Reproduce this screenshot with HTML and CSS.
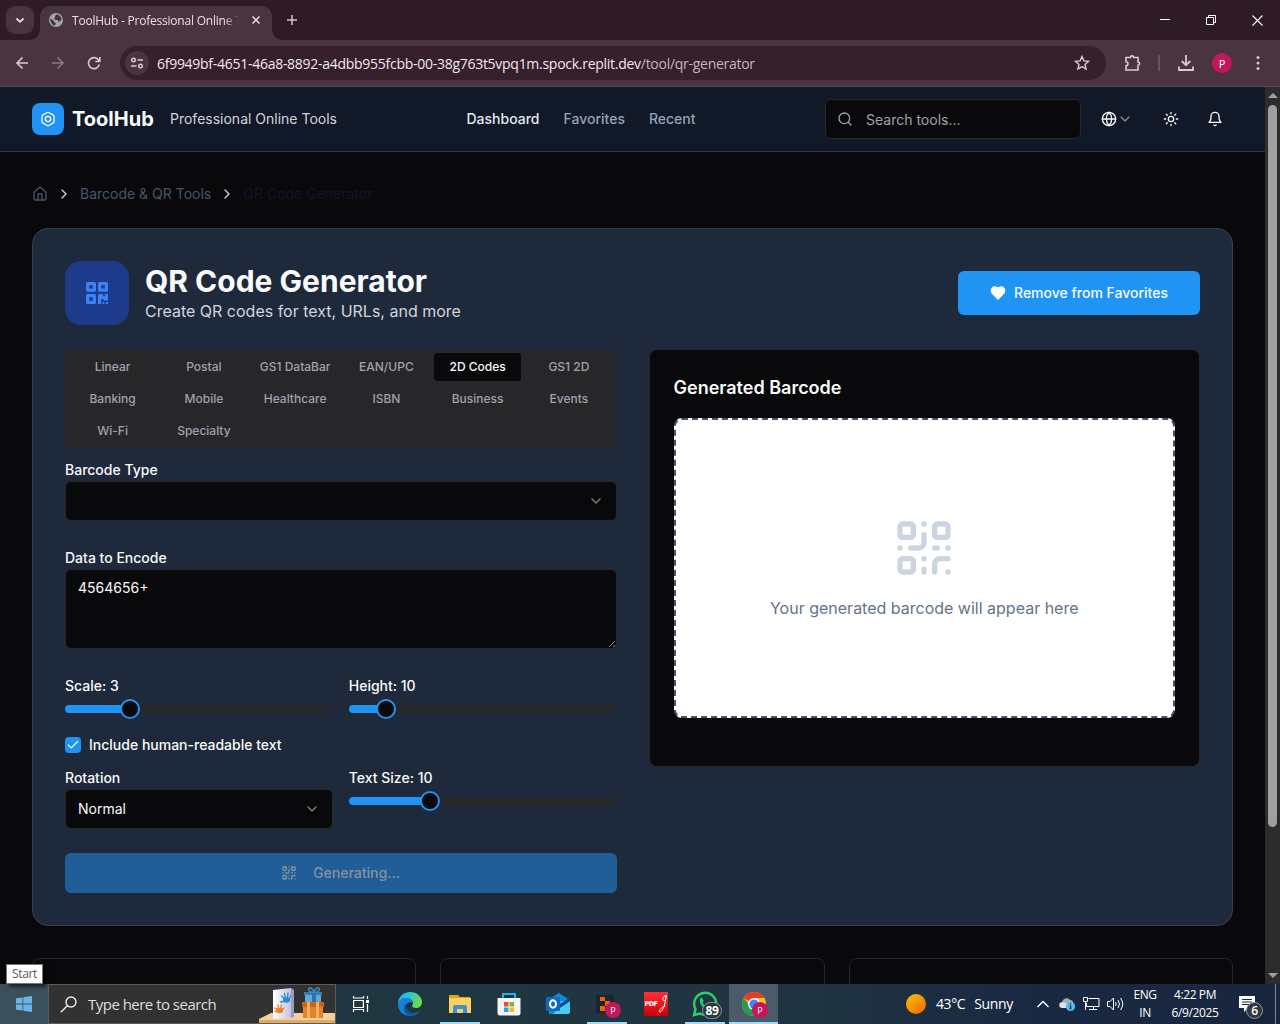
FILE: index.html
```html
<!DOCTYPE html>
<html lang="en">
<head>
<meta charset="utf-8">
<title>ToolHub - Professional Online Tools</title>
<link rel="stylesheet" href="styles.css">
</head>
<body>
<svg class="defs" width="0" height="0" aria-hidden="true">
  <symbol id="qr" viewBox="0 0 24 24"><rect width="5" height="5" x="3" y="3" rx="1"/><rect width="5" height="5" x="16" y="3" rx="1"/><rect width="5" height="5" x="3" y="16" rx="1"/><path d="M21 16h-3a2 2 0 0 0-2 2v3M21 21v.01M12 7v3a2 2 0 0 1-2 2H7M3 12h.01M12 3h.01M12 16v.01M16 12h1M21 12v.01M12 21v-1"/></symbol>
  <symbol id="down" viewBox="0 0 24 24"><path d="m6 9 6 6 6-6"/></symbol>
  <symbol id="right" viewBox="0 0 24 24"><path d="m9 18 6-6-6-6"/></symbol>
</svg>

<div class="tabstrip">
  <div class="tab-search"><svg class="ln" width="10" height="10" viewBox="0 0 10 10"><path d="m1.500 3.500 3.500 3.300 3.500-3.300" stroke-width="1.800"/></svg></div>
  <div class="tab">
    <svg width="14" height="14" viewBox="0 0 14 14"><circle cx="7" cy="7" r="7" fill="#9fa7ad"/><path d="M7.500 1.500 6 3v2H4.500L6.500 7H9v2l2-1 1.500-1C13 4 10 1.500 7.500 1.500ZM1.500 5.500C1 9 3 12 6 12.500L7 10.500 5 9V8Z" fill="#4a3440"/></svg>
    <span class="tab-title">ToolHub - Professional Online Tools</span>
    <svg class="ln tab-x" width="10" height="10" viewBox="0 0 10 10"><path d="m1.500 1.500 7 7m0-7-7 7" stroke-width="1.500"/></svg>
  </div>
  <svg class="ln new-tab" width="12" height="12" viewBox="0 0 12 12"><path d="M6 1v10M1 6h10" stroke-width="1.500"/></svg>
  <div class="win-btns">
    <svg width="11" height="10" viewBox="0 0 11 10"><path d="M0 4.500h10" stroke="#fff"/></svg>
    <svg width="11" height="11" viewBox="0 0 11 11" fill="none" stroke="#fff"><path d="M.5 2.500h7v7h-7zM2.500 2.500v-2h7v7h-2"/></svg>
    <svg width="11" height="11" viewBox="0 0 11 11"><path d="m.5.5 10 10m0-10-10 10" stroke="#fff" stroke-width="1.100"/></svg>
  </div>
</div>

<div class="toolbar">
  <svg class="ln t-back" width="14" height="14" viewBox="0 0 14 14"><path d="M13 7H2m5.500-5.500L2 7l5.500 5.500" stroke-width="1.600"/></svg>
  <svg class="ln t-fwd" width="14" height="14" viewBox="0 0 14 14"><path d="M1 7h11M6.500 1.500 12 7l-5.500 5.500" stroke-width="1.600"/></svg>
  <svg class="ln t-rel" width="14" height="14" viewBox="0 0 14 14"><path d="M12.300 8.500A5.500 5.500 0 1 1 11.500 4L12.500 5.200M12.800 1v4.500H8.300" stroke-width="1.600"/></svg>
  <div class="omnibox">
    <span class="site-info"><svg class="ln" width="14" height="14" viewBox="0 0 14 14"><circle cx="3.500" cy="4" r="1.800"/><path d="M7.500 4H13M1 10h5.500"/><circle cx="10.500" cy="10" r="1.800"/></svg></span>
    <span class="url">6f9949bf-4651-46a8-8892-a4dbb955fcbb-00-38g763t5vpq1m.spock.replit.dev<i>/tool/qr-generator</i></span>
    <svg class="ln star" width="16" height="16" viewBox="0 0 16 16"><path d="m8 1.500 1.900 4.400 4.700.4-3.600 3.100 1.100 4.700L8 11.600l-4.100 2.500L5 9.400 1.400 6.300l4.700-.4Z" stroke-width="1.400"/></svg>
  </div>
  <svg class="ln t-ext" width="18" height="18" viewBox="0 0 18 18"><path d="M2 3.500h4.500a1.600 1.600 0 0 1 3.200 0H14V8a1.600 1.600 0 0 1 0 3.200V16H2v-4.300a2 2 0 0 0 0-4Z" stroke-width="1.600"/></svg>
  <span class="t-sep"></span>
  <svg class="ln t-dl" width="18" height="18" viewBox="0 0 18 18"><path d="M9 1v10M4.700 7 9 11.200 13.300 7M2 12.500V16h14v-3.500" stroke-width="1.800"/></svg>
  <span class="avatar">P</span>
  <svg class="t-menu" width="4" height="16" viewBox="0 0 4 16" fill="#e3c5d3"><circle cx="2" cy="2.500" r="1.500"/><circle cx="2" cy="8" r="1.500"/><circle cx="2" cy="13.500" r="1.500"/></svg>
</div>

<div class="viewport">
  <div class="page">
    <header class="header">
      <div class="logo"><svg class="ic" width="16" height="16" viewBox="0 0 24 24"><path d="M21 16V8a2 2 0 0 0-1-1.730l-7-4a2 2 0 0 0-2 0l-7 4A2 2 0 0 0 3 8v8a2 2 0 0 0 1 1.730l7 4a2 2 0 0 0 2 0l7-4A2 2 0 0 0 21 16z"/><circle cx="12" cy="12" r="4"/></svg></div>
      <strong class="brand">ToolHub</strong>
      <span class="tagline">Professional Online Tools</span>
      <nav class="nav"><a class="on">Dashboard</a><a>Favorites</a><a>Recent</a></nav>
      <div class="search"><svg class="ic" width="16" height="16" viewBox="0 0 24 24"><circle cx="11" cy="11" r="8"/><path d="m21 21-4.300-4.300"/></svg><span>Search tools...</span></div>
      <div class="lang"><svg class="ic" width="16" height="16" viewBox="0 0 24 24"><circle cx="12" cy="12" r="10"/><path d="M12 2a14.500 14.500 0 0 0 0 20 14.500 14.500 0 0 0 0-20M2 12h20"/></svg><svg class="ic dim" width="16" height="16"><use href="#down"/></svg></div>
      <svg class="ic sun" width="16" height="16" viewBox="0 0 24 24"><circle cx="12" cy="12" r="4"/><path d="M12 2v2M12 20v2m-7.070-17.070 1.410 1.410m11.320 11.320 1.410 1.410M2 12h2m16 0h2M6.340 17.660l-1.410 1.410M19.070 4.930l-1.410 1.410"/></svg>
      <svg class="ic bell" width="16" height="16" viewBox="0 0 24 24"><path d="M6 8a6 6 0 0 1 12 0c0 7 3 9 3 9H3s3-2 3-9M10.300 21a1.940 1.940 0 0 0 3.400 0"/></svg>
    </header>
    <main class="main">
      <div class="crumbs">
        <svg class="ic" width="16" height="16" viewBox="0 0 24 24"><path d="M15 21v-8a1 1 0 0 0-1-1h-4a1 1 0 0 0-1 1v8"/><path d="M3 10a2 2 0 0 1 .709-1.528l7-5.999a2 2 0 0 1 2.582 0l7 5.999A2 2 0 0 1 21 10v9a2 2 0 0 1-2 2H5a2 2 0 0 1-2-2z"/></svg>
        <svg class="ic sep" width="16" height="16"><use href="#right"/></svg>
        <span>Barcode &amp; QR Tools</span>
        <svg class="ic sep" width="16" height="16"><use href="#right"/></svg>
        <span class="here">QR Code Generator</span>
      </div>
      <section class="card">
        <div class="card-head">
          <div class="tool-icon"><svg width="24" height="24" viewBox="0 0 24 24" fill="none" stroke="#3b82f6" stroke-width="3.200" stroke-linejoin="round"><rect x="2.600" y="2.600" width="6.800" height="6.600"/><rect x="14.600" y="2.600" width="6.800" height="6.600"/><rect x="2.600" y="14.600" width="6.800" height="6.800"/><path d="M13 14.500q0-1.500 1.500-1.500H18v2.200h1.800V13H23v6.500h-4.500V18H16.200v5H13zM17.500 21h2v2h-2zM21 21h2v2h-2z" fill="#3b82f6" stroke="none"/></svg></div>
          <div class="titles"><h1>QR Code Generator</h1><p>Create QR codes for text, URLs, and more</p></div>
          <button class="fav"><svg width="16" height="16" viewBox="0 0 24 24" fill="#fff" stroke="#fff" stroke-width="2"><path d="M19 14c1.490-1.460 3-3.210 3-5.500A5.500 5.500 0 0 0 16.500 3c-1.760 0-3 .5-4.500 2-1.500-1.500-2.740-2-4.500-2A5.500 5.500 0 0 0 2 8.500c0 2.300 1.500 4.050 3 5.500l7 7Z"/></svg>Remove from Favorites</button>
        </div>
        <div class="cols">
          <div class="form">
            <div class="tabs"><span>Linear</span><span>Postal</span><span>GS1 DataBar</span><span>EAN/UPC</span><span class="on">2D Codes</span><span>GS1 2D</span><span>Banking</span><span>Mobile</span><span>Healthcare</span><span>ISBN</span><span>Business</span><span>Events</span><span>Wi-Fi</span><span>Specialty</span></div>
            <div class="field first"><label>Barcode Type</label><div class="select"><span></span><svg class="ic" width="16" height="16"><use href="#down"/></svg></div></div>
            <div class="field"><label>Data to Encode</label><textarea class="area">4564656+</textarea></div>
            <div class="pair">
              <div><label>Scale: 3</label><div class="slider"><span class="fill" style="width:65px"></span><span class="thumb"></span></div></div>
              <div><label>Height: 10</label><div class="slider"><span class="fill" style="width:37px"></span><span class="thumb"></span></div></div>
            </div>
            <div class="check"><span class="box"><svg class="ic" width="14" height="14" viewBox="0 0 24 24"><path d="M20 6 9 17l-5-5"/></svg></span><label>Include human-readable text</label></div>
            <div class="pair second">
              <div><label>Rotation</label><div class="select"><span>Normal</span><svg class="ic" width="16" height="16"><use href="#down"/></svg></div></div>
              <div><label>Text Size: 10</label><div class="slider"><span class="fill" style="width:81px"></span><span class="thumb"></span></div></div>
            </div>
            <button class="gen"><svg class="ic" width="16" height="16"><use href="#qr"/></svg>Generating...</button>
          </div>
          <div class="result">
            <h2>Generated Barcode</h2>
            <div class="drop"><svg class="ic" width="64" height="64"><use href="#qr"/></svg><p>Your generated barcode will appear here</p></div>
          </div>
        </div>
      </section>
      <div class="more"><div></div><div></div><div></div></div>
    </main>
  </div>
  <div class="scroll"><i class="up"></i><span></span><i class="dn"></i></div>
</div>

<div class="taskbar">
  <div class="start"><svg width="16" height="16" viewBox="0 0 16 16" fill="#6cb5e0"><path d="M0 2.300 6.500 1.400v6.200H0zM7.300 1.300 16 0v7.600H7.300zM0 8.400h6.500v6.200L0 13.700zM7.300 8.400H16V16l-8.700-1.300z"/></svg></div>
  <div class="tsearch">
    <svg width="17" height="17" viewBox="0 0 17 17" fill="none" stroke="#eee" stroke-width="1.400"><circle cx="11" cy="6" r="5"/><path d="M7.300 9.700.8 16.200"/></svg>
    <span>Type here to search</span>
    <svg class="gifts" width="76" height="38" viewBox="0 0 76 38">
      <defs><linearGradient id="paper"><stop offset="0" stop-color="#fff"/><stop offset="1" stop-color="#c3c1e3"/></linearGradient></defs>
      <path d="M0 34 12 28H76V38H0Z" fill="#f4d19a"/><path d="M0 35h76v3H0z" fill="#e2aa66"/>
      <path d="m14 5 18-2v30l-18 1z" fill="url(#paper)"/><path d="m32 3 3 2v27l-3 1z" fill="#9d9cba"/>
      <g fill="#258fd0" stroke="#258fd0" stroke-width="1.300" stroke-linecap="round"><ellipse cx="27.500" cy="15" rx="3" ry="2"/><path d="m25 13-2.500-2m4 2-1-4.500m3 4.500.5-5m1 6 2-3.500m-7.500 6-3 .5"/></g>
      <g fill="#f08029" stroke="#f08029" stroke-width="1.300" stroke-linecap="round"><ellipse cx="20.500" cy="25.500" rx="3" ry="2"/><path d="m18 24-2.500-1m4 1-.5-4m2.500 4 1-4m0 5 2.500-2m-6.500 3-2.500.5"/></g>
      <path d="M46 9h16v9H46z" fill="#62abd7"/><path d="M45 7h18v3H45z" fill="#377eae"/><path d="M53 7h4v11h-4z" fill="#326fab"/><path d="M55 7c-6 1-7-5-3-4l3 3 3-3c4-1 3 5-3 4Z" fill="none" stroke="#3d8fcb" stroke-width="1.500"/>
      <path d="M44 19h20v14H44z" fill="#e4812c"/><path d="M43 17h22v5H43z" fill="#c46620"/><path d="M48 17h3v16h-3zm9 0h3v16h-3z" fill="#efb257"/>
    </svg>
  </div>
  <div class="apps">
    <span><svg width="18" height="16" viewBox="0 0 18 16" fill="none" stroke="#fff" stroke-width="1.200"><path d="M1.600 4.500h9.800v7H1.600zM1.500 0v2h10V0M1.500 16v-2.500h10V16M15.500 0v3M15.500 8v8"/><path d="M14 4h3v3h-3z" fill="#fff" stroke="none"/></svg></span>
    <span><svg width="24" height="24" viewBox="0 0 24 24"><defs><linearGradient id="eg" x2="1" y2=".3"><stop stop-color="#2aa8e8"/><stop offset=".5" stop-color="#2cc5d7"/><stop offset="1" stop-color="#6ddc4b"/></linearGradient></defs><path d="M0 12C0 5 5 0 12 0s12 5 12 10c0 4-3 6-6 6-2 0-4-.7-4-2 0-.8 1-1.200 1-2.700C15 8 11 6 8 6 4 6 1 9 0 12Z" fill="url(#eg)"/><path d="M0 12C1 7 5 6 8 6s6 2 7 5c-3-2-7 0-7 4 0 4 4 6 8 6 3 0 5-1 6.500-2.500C20 22 16 24 12 24 5 24 0 19 0 12Z" fill="#1583db"/><path d="M8 15c0 4 4 6 8 6 3 0 5-1 6.500-2.500C20 22 16 24 12 24c-4-1-7-5-6-9 .5-3 4-5.500 6-5-2 1-4 2-4 5Z" fill="#0c58a9"/></svg></span>
    <span class="run"><svg width="22" height="18" viewBox="0 0 22 18"><path d="M0 0h9l2 2h10v15H0z" fill="#e1a119"/><path d="M0 3h22v15H0z" fill="#fdd263"/><path d="M4 18v-6q0-2 2-2h10q2 0 2 2v6h-4v-4H8v4z" fill="#3d91d4"/></svg></span>
    <span><svg width="24" height="24" viewBox="0 0 24 24"><path d="M6 7V2h12v5" fill="none" stroke="#26b1ed" stroke-width="2"/><path d="M.5 6h23v15q0 2.500-2.500 2.500H3Q.5 23.500.5 21z" fill="#f4f4f4"/><path d="M7 10h4.500v4.500H7z" fill="#e94f29"/><path d="M12.500 10H17v4.500h-4.500z" fill="#7cb928"/><path d="M7 15.500h4.500V20H7z" fill="#22a2e8"/><path d="M12.500 15.500H17V20h-4.500z" fill="#fab71b"/></svg></span>
    <span><svg width="24" height="24" viewBox="0 0 24 24"><path d="m3 7 10-6 9 6v15H3z" fill="#1389d7"/><path d="M14 9h8v9h-8z" fill="#35b7f1"/><path d="M13 16 24 9v11q0 2-2 2H7z" fill="#43cff5"/><path d="m14 12 9-6v4l-9 6z" fill="#174c94"/><rect y="5" width="14" height="14" rx="1" fill="#0b6ac2"/><ellipse cx="7" cy="12" rx="3" ry="3.700" fill="none" stroke="#fff" stroke-width="2"/></svg></span>
    <span class="run"><svg width="24" height="24" viewBox="0 0 24 24"><rect x="1" y="3" width="18" height="18" rx="2" fill="#1c2333"/><path d="M5 5h5v4H5zm5 4h5v5h-5zM5 14h5v5H5z" fill="#f26207"/></svg><b class="pb">P</b></span>
    <span class="pdf"><em>PDF</em><svg width="10" height="20" viewBox="0 0 11 20"><path d="M10 1C6 0 4 5 6 6s3-2 3-5c-1 8-3 17-7 18-2-1 1-5 6-7" fill="none" stroke="#fff" stroke-width="1.100"/></svg></span>
    <span class="run"><svg width="26" height="26" viewBox="0 0 26 26"><path d="M2 24 3.500 18A11 11 0 1 1 8 22.500Z" fill="none" stroke="#25d366" stroke-width="2.400"/><path d="M8 8c1-2 2-1.500 2.500-.5l1 2.500-1 1.500c1 2 2 3 4 4l1.500-1.500 3 1.500c0 3-3 3.500-5 2.500-3-1-7-5-6-10Z" fill="#25d366"/></svg><b class="count">89</b></span>
    <span class="run active"><svg width="24" height="24" viewBox="0 0 24 24"><circle cx="12" cy="12" r="12" fill="#fbc116"/><path d="M1.600 6A12 12 0 0 1 22.400 6H12v6Z" fill="#e33b2e"/><path d="M1.600 6A12 12 0 0 0 12 24l5.200-9-8 0Z" fill="#269c4d"/><circle cx="12" cy="12" r="6" fill="#fff"/><circle cx="12" cy="12" r="4.600" fill="#4285f4"/></svg><b class="pb">P</b></span>
  </div>
  <div class="tray">
    <i class="sunny"></i><span class="weather">43°C<span>Sunny</span></span>
    <svg class="caret" width="12" height="8" viewBox="0 0 12 8" fill="none" stroke="#fff" stroke-width="1.400"><path d="m.5 7 5.500-5.500L11.500 7"/></svg>
    <svg class="cloud" width="17" height="15" viewBox="0 0 17 15"><path d="M3 11a3 3 0 0 1 0-6C4 1 9 0 11 3c3 0 4 3 3 6l-3 2z" fill="#a8adb5"/><path d="M3 11a3 3 0 1 1 3-5c2 0 3 1 3 5z" fill="#dfe2e6"/><circle cx="11.500" cy="9.500" r="4.600" fill="#4fbff0"/><path d="M11.500 6.300v1.200M11.500 8.500v4" stroke="#12324a" stroke-width="1.500"/></svg>
    <svg class="net" width="17" height="14" viewBox="0 0 17 14" fill="none" stroke="#fff"><path d="M5.500 1.500h10.500v8H3.500V6M10.500 9.500v3M6 12.500h8M.5.500h4v4h-4zM2.500 4.500v8.500"/></svg>
    <svg class="vol" width="17" height="14" viewBox="0 0 17 14" fill="none" stroke="#fff"><path d="M.5 4.500H3L6.500 1v12L3 9.500H.5zM8.500 5q1.500 2 0 4M11 3q3 4 0 8M13.500 1q4.500 6 0 12"/></svg>
    <span class="lng">ENG<br>IN</span>
    <span class="clock">4:22 PM<br>6/9/2025</span>
    <span class="note"><svg width="16" height="17" viewBox="0 0 16 17"><path d="M0 0h16v12H9l-4 4v-4H0z" fill="#fff"/><path d="M3 3.500h10M3 6h10M3 8.500h7" stroke="#1a2942"/></svg><b class="count six">6</b></span>
  </div>
</div>
<div class="tip">Start</div>
</body>
</html>
```
FILE: styles.css
```css
* { box-sizing: border-box; }
body { margin: 0; width: 1280px; height: 1024px; overflow: hidden; display: flex; flex-direction: column; background: #09090b; color: #fafafa; font-family: Inter, sans-serif; font-size: 14px; position: relative; }
svg { display: block; flex: none; }
h1, h2, p { margin: 0; }
.defs { position: absolute; }
.ic { fill: none; stroke: currentColor; stroke-width: 2; stroke-linecap: round; stroke-linejoin: round; }
.ln { fill: none; stroke: currentColor; stroke-width: 1.4; }

/* browser chrome */
.tabstrip, .toolbar, .taskbar, .tip { font-family: "Open Sans", "Noto Sans", sans-serif; }
.tabstrip { height: 40px; flex: none; background: #2e1b26; display: flex; align-items: center; color: #ecdfe5; }
.tab-search { width: 28px; height: 28px; margin-left: 6px; border-radius: 9px; background: #4a3440; display: grid; place-items: center; }
.tab { width: 232px; height: 34px; margin: 6px 0 0 6px; padding: 0 11px 6px 9px; border-radius: 10px 10px 0 0; background: #4a3440; display: flex; align-items: center; position: relative; }
.tab::before, .tab::after { content: ""; position: absolute; bottom: 0; width: 10px; height: 10px; }
.tab::before { left: -10px; background: radial-gradient(circle at 0 0, transparent 9.500px, #4a3440 10px); }
.tab::after { right: -10px; background: radial-gradient(circle at 100% 0, transparent 9.500px, #4a3440 10px); }
.tab-title { width: 167px; margin-left: 9px; font-size: 12px; letter-spacing: -.22px; white-space: nowrap; overflow: hidden; -webkit-mask-image: linear-gradient(90deg, #000 152px, transparent 167px); mask-image: linear-gradient(90deg, #000 152px, transparent 167px); }
.tab-x { margin-left: auto; }
.new-tab { margin-left: 14px; color: #dcc0cd; }
.win-btns { margin-left: auto; padding-right: 17px; display: flex; align-items: center; gap: 35px; }
.toolbar { height: 47px; flex: none; background: #4a3440; border-bottom: 1px solid #5a4a52; display: flex; align-items: center; color: #e3c5d3; padding-left: 15px; }
.t-fwd { margin-left: 22px; opacity: .45; }
.t-rel { margin-left: 22px; }
.omnibox { width: 986px; height: 34px; margin-left: 19px; border-radius: 17px; background: #35202b; display: flex; align-items: center; padding: 0 16px 0 5px; }
.site-info { width: 24px; height: 24px; border-radius: 50%; background: #4a3440; display: grid; place-items: center; }
.url { margin-left: 8px; font-size: 14px; letter-spacing: -.275px; color: #f3e8ed; white-space: nowrap; }
.url i { font-style: normal; color: #c7b5be; }
.star { margin-left: auto; }
.t-ext { margin-left: 18px; }
.t-sep { width: 2px; height: 16px; margin: 0 17px 0 16px; background: #6b525e; }
.avatar { width: 20px; height: 20px; margin-left: 17px; border-radius: 50%; background: #c2185b; color: #fff; font-size: 11px; display: grid; place-items: center; }
.t-menu { margin-left: 24px; }

/* page */
.viewport { height: 897px; flex: none; display: flex; line-height: 20px; }
.page { width: 1265px; overflow: hidden; }
.header { height: 65px; padding: 0 42px 0 32px; background: #111827; border-bottom: 1px solid #2c3648; display: flex; align-items: center; }
.logo { width: 32px; height: 32px; border-radius: 8px; background: #2094f3; display: grid; place-items: center; }
.brand { width: 82px; margin-left: 8px; font-size: 20px; line-height: 24px; font-weight: 700; }
.tagline { margin-left: 16px; color: #d1d5db; }
.nav { margin-left: 129.5px; display: flex; gap: 24px; font-weight: 500; color: #94a3b8; }
.nav .on { color: #e2e8f0; }
.search { width: 256px; height: 40px; margin-left: auto; border: 1px solid #27272a; border-radius: 6px; background: #09090b; color: #94a3b8; display: flex; align-items: center; gap: 13px; padding: 0 11px; }
.search span { color: #a1a1aa; font-size: 14px; padding-top: 2px; }
.lang { margin-left: 20px; display: flex; }
.dim { opacity: .5; }
.sun { margin-left: 30px; }
.bell { margin-left: 28px; }
.main { padding: 32px; }
.crumbs { height: 20px; margin-bottom: 24px; display: flex; align-items: center; gap: 8px; color: #475569; }
.sep { color: #cbd5e1; }
.here { color: #0f172a; }
.card { height: 698px; padding: 32px; border: 1px solid #334155; border-radius: 16px; background: #1e293b; }
.card-head { height: 64px; margin-bottom: 24px; display: flex; align-items: center; }
.tool-icon { width: 64px; height: 64px; margin-right: 16px; border-radius: 16px; background: #1e3a8a; display: grid; place-items: center; }
h1 { font-size: 30px; line-height: 36px; font-weight: 700; }
.titles p { font-size: 16px; line-height: 24px; color: #d1d5db; }
.fav { width: 242px; height: 44px; margin-left: auto; border: 0; border-radius: 6px; background: #2094f3; color: #f8fafc; font: 500 14px/20px Inter, sans-serif; display: flex; align-items: center; justify-content: center; gap: 8px; }
.cols { display: grid; grid-template-columns: 1fr 1fr; gap: 32px; align-items: start; }
.form { display: flex; flex-direction: column; }
.tabs { height: 100px; padding: 4px; border-radius: 6px; background: #27272a; display: grid; grid-template-columns: repeat(6, 1fr); grid-auto-rows: 28px; gap: 4px; font-size: 12px; line-height: 16px; font-weight: 500; color: #a1a1aa; }
.tabs span { display: grid; place-items: center; border-radius: 4px; white-space: nowrap; }
.tabs .on { background: #09090b; color: #fafafa; }
label { display: block; height: 22px; line-height: 22px; font-weight: 500; }
.field { margin-top: 26px; }
.field.first { margin-top: 10px; }
.select { height: 40px; padding: 0 12px; border: 1px solid #27272a; border-radius: 6px; background: #09090b; display: flex; align-items: center; justify-content: space-between; }
.select .ic { opacity: .5; }
.area { display: block; width: 100%; height: 80px; padding: 8px 12px; border: 1px solid #27272a; border-radius: 6px; background: #09090b; color: #fafafa; font: 14px/20px Inter, sans-serif; resize: vertical; color-scheme: dark; }
.pair { margin-top: 26px; display: grid; grid-template-columns: 1fr 1fr; gap: 16px; }
.pair.second { margin-top: 14px; }
.slider { height: 8px; margin-top: 8px; border-radius: 4px; background: #27272a; display: flex; align-items: center; }
.fill { height: 8px; border-radius: 4px 0 0 4px; background: #2094f3; }
.thumb { width: 20px; height: 20px; margin-left: -10px; flex: none; border: 2px solid #2094f3; border-radius: 50%; background: #09090b; }
.check { height: 16px; margin-top: 24px; display: flex; align-items: center; gap: 8px; }
.box { width: 16px; height: 16px; border-radius: 4px; background: #2094f3; display: grid; place-items: center; }
.gen { height: 40px; margin-top: 24px; border: 0; border-radius: 6px; background: #2094f3; color: #f8fafc; opacity: .5; font: 500 14px/20px Inter, sans-serif; display: flex; align-items: center; justify-content: center; gap: 16px; }
.result { height: 418px; padding: 24px; border: 1px solid #27272a; border-radius: 8px; background: #09090b; }
h2 { height: 44px; font-size: 18px; line-height: 28px; font-weight: 600; }
.drop { height: 300px; border: 2px dashed #475569; border-radius: 8px; background: #fff; display: flex; flex-direction: column; align-items: center; justify-content: center; gap: 16px; color: #cbd5e1; }
.drop p { font-size: 16px; line-height: 24px; color: #64748b; }
.more { margin-top: 32px; display: grid; grid-template-columns: repeat(3, 1fr); gap: 24px; }
.more div { height: 120px; border: 1px solid #27272a; border-radius: 8px; }
.scroll { width: 15px; background: #2c2c2c; display: flex; flex-direction: column; align-items: center; padding: 6px 0; }
.scroll span { width: 9px; height: 722px; margin-top: 7px; border-radius: 5px; background: #9f9f9f; }
.scroll i { border: solid transparent; border-width: 0 5px 5px; border-bottom-color: #9f9f9f; }
.scroll .dn { margin-top: auto; border-width: 5px 5px 0; border-top-color: #9f9f9f; }

/* taskbar */
.taskbar { height: 40px; flex: none; display: flex; background: linear-gradient(90deg, #1f3640, #203540 60%, #1a2942 80%, #18253f); }
.start { width: 48px; background: #3b505b; display: grid; place-items: center; }
.tsearch { width: 288px; border: 1px solid #5c5c5c; background: #323232; display: flex; align-items: center; padding-left: 11px; }
.tsearch > span { margin-left: 11px; font-size: 15px; letter-spacing: -.52px; color: #dedede; white-space: nowrap; }
.gifts { margin-left: auto; }
.apps { display: grid; grid-template-columns: 49px 50px repeat(6, 49px) 49px; }
.apps > span { display: grid; place-items: center; position: relative; }
.run::after { content: ""; position: absolute; bottom: 0; left: 5px; right: 4px; height: 2px; background: #9bdcfb; }
.active { background: #4b5b69; }
.active::after { left: 0; right: 0; }
.pb { position: absolute; left: 23px; top: 18px; width: 16px; height: 16px; border-radius: 50%; background: #c2185b; color: #fff; font-size: 9px; font-weight: 400; display: grid; place-items: center; }
.apps .pdf { width: 24px; height: 24px; margin: 8px 12px 8px 13px; display: flex; align-items: center; justify-content: center; background: linear-gradient(#ff3035, #ca0007); }
.pdf em { font: 700 6.500px "DejaVu Sans", sans-serif; color: #fff; letter-spacing: -.5px; }
.count { position: absolute; left: 22px; top: 18px; min-width: 20px; height: 17px; border: 1px solid #8c969b; border-radius: 9px; background: #293840; color: #fff; font-size: 12px; line-height: 15px; text-align: center; letter-spacing: -.4px; }
.tray { flex: 1; display: flex; align-items: center; justify-content: flex-end; color: #fff; font-size: 12px; line-height: 18px; }
.sunny { width: 20px; height: 20px; border-radius: 50%; background: linear-gradient(135deg, #ffc400, #ec6500); }
.weather { width: 77px; margin: 0 24px 0 10px; font-size: 14px; letter-spacing: -.38px; white-space: nowrap; }
.weather span { margin-left: 9px; }
.cloud { margin-left: 10px; }
.net { margin-left: 7px; }
.vol { margin-left: 7px; }
.lng { width: 30px; margin-left: 6px; text-align: center; letter-spacing: -.4px; }
.clock { width: 56px; margin-left: 7px; text-align: center; letter-spacing: -.4px; white-space: nowrap; }
.note { width: 37px; height: 40px; margin-left: 16px; padding-top: 12px; border-right: 1px solid #7e8796; margin-right: 4px; position: relative; }
.six { left: 7px; top: 18px; min-width: 17px; background: #33383f; font-weight: 600; }
.tip { position: absolute; left: 6px; top: 964px; width: 37px; height: 20px; border: 1px solid #767676; background: #fff; color: #575757; font-size: 12px; line-height: 18px; text-align: center; letter-spacing: -.3px; box-shadow: 3px 3px 3px #0008; }
```
